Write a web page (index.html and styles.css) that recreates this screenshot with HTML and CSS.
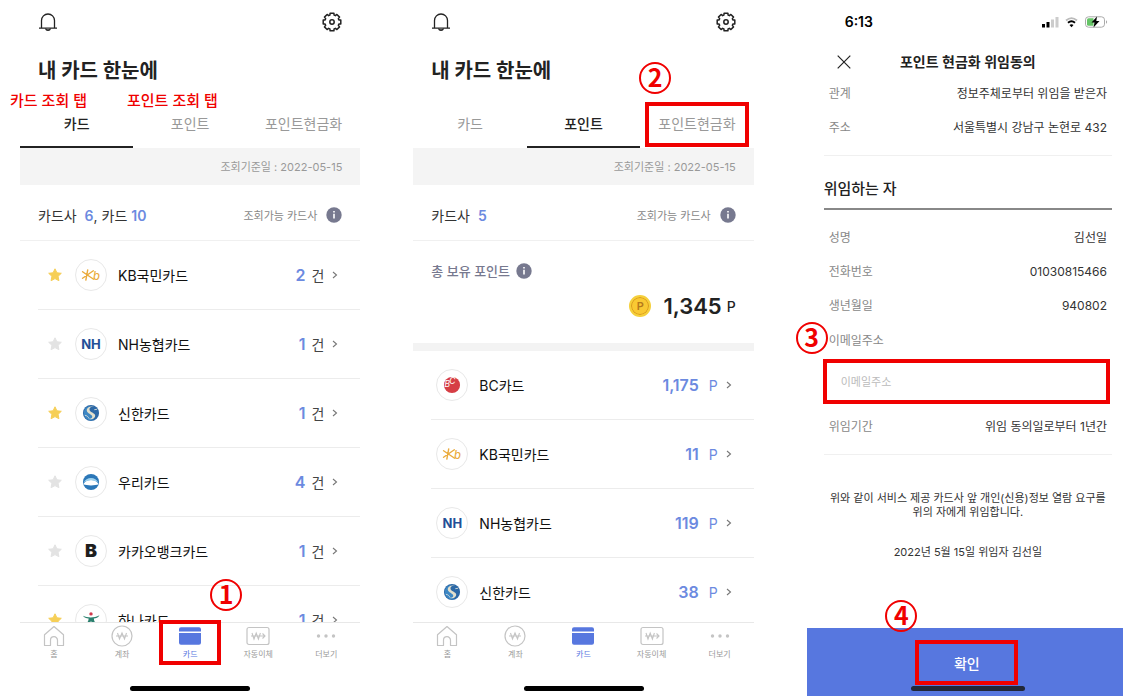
FILE: index.html
```html
<!DOCTYPE html>
<html lang="ko">
<head>
    <meta charset="UTF-8">
    <meta name="viewport" content="width=device-width, initial-scale=1.0">
    <title>내 카드 한눈에</title>
    <link rel="stylesheet" href="styles.css">
</head>
<body>
    <!-- Иконки и логотипы -->
    <svg class="sprite" aria-hidden="true">
        <symbol id="bell" viewBox="0 0 20 20">
            <path d="M3.5 16V8.5a6.5 6.5 0 0 1 13 0V16M1 16.2h18" fill="none" stroke="#222" stroke-width="1.3"/>
            <path d="M7.5 16.5a2.6 2.6 0 0 0 5 0" fill="#777" stroke="#222" stroke-width="1.2"/>
        </symbol>
        <symbol id="gear" viewBox="0 0 20 20">
            <path d="M8.1 1.2L11.9 1.2 12.1 3.1 13.4 3.65 14.9 2.45 17.55 5.1 16.35 6.6 16.9 7.9 18.8 8.1 18.8 11.9 16.9 12.1 16.35 13.4 17.55 14.9 14.9 17.55 13.4 16.35 12.1 16.9 11.9 18.8 8.1 18.8 7.9 16.9 6.6 16.35 5.1 17.55 2.45 14.9 3.65 13.4 3.1 12.1 1.2 11.9 1.2 8.1 3.1 7.9 3.65 6.6 2.45 5.1 5.1 2.45 6.6 3.65 7.9 3.1z" fill="none" stroke="#222" stroke-width="1.5" stroke-linejoin="round"/>
            <circle cx="10" cy="10" r="2.2" fill="none" stroke="#222" stroke-width="1.5"/>
        </symbol>
        <symbol id="star" viewBox="0 0 16 16">
            <path d="M8 1.8l1.9 4 4.4.5-3.2 3 .8 4.4L8 11.6l-3.9 2.1.8-4.4-3.2-3 4.4-.5z" fill="currentColor" stroke="currentColor" stroke-linejoin="round"/>
        </symbol>
        <symbol id="chevron" viewBox="0 0 6 10">
            <path d="M1 2l3.5 3L1 8" fill="none" stroke="#777" stroke-width="1.1"/>
        </symbol>
        <symbol id="info" viewBox="0 0 16 16">
            <circle cx="8" cy="8" r="7.7" fill="#77798f"/>
            <path d="M8 6.8v4.8M8 4v1.6" stroke="#fff" stroke-width="1.6"/>
        </symbol>
        <symbol id="kb" viewBox="0 0 32 32">
            <path d="M12.5 10.5l-2 11M7 12.5l11 7.5M18.5 11.5L7 19.5" fill="none" stroke="#eaab3e" stroke-width="1.5" stroke-linecap="round"/>
        </symbol>
        <symbol id="shinhan" viewBox="0 0 32 32">
            <circle cx="16" cy="16" r="8.6" fill="#2c68a6"/>
            <path d="M8.5 14a8 8 0 0 1 6-5.500l-1 5 6 5-2 5.300a8 8 0 0 1-9-9.800z" fill="#3c87c4"/>
            <path d="M20.500 10.500c-3-2.500-7-.5-6 2.500 1 2.500 6 2.800 6 6 0 2.500-3 4.500-6.500 3.500 3-.5 4-2 3-3.500-1.500-2.200-6-3-5.500-6.500.5-3.200 5.500-5 9-2z" fill="#e2dfcc"/>
            <path d="M9.500 18.500c2 0 3.500 1.500 4.500 3.500M19.500 12.500l3-.5" stroke="#cfd8d8" fill="none"/>
        </symbol>
        <symbol id="woori" viewBox="0 0 32 32">
            <circle cx="16" cy="16" r="8.6" fill="#2b77b8"/>
            <path d="M7.800 18.500c3-6.200 13.400-6.200 16.400 0-4 1.500-12.400 1.500-16.400 0z" fill="#fff"/>
            <path d="M8 17c3-7 13-7 16 0-4-4-12-4-16 0z" fill="#9fd3ef"/>
        </symbol>
        <symbol id="hana" viewBox="0 0 32 32">
            <circle cx="16" cy="9.5" r="1.8" fill="#d2384c"/>
            <path d="M7.500 11.500c5 2.500 12 2.500 17.500-.5-1 2.500-4 3.300-6 3.500 0 3 2 5.500 5 7.500h-3.500c-2-1-3.500-3-4.500-5-1 2-2.500 4-4.500 5H8c3.500-2 5.500-4.500 5.500-7.500-2.500-.3-5-1-6-3z" fill="#2b806f"/>
        </symbol>
        <symbol id="home" viewBox="0 0 24 22">
            <path d="M2.500 9.800L12 1.500l9.500 8.300V20.500h-6v-5.300a3.500 3.500 0 0 0-7 0v5.300h-6z" fill="none" stroke="#c4c4c4" stroke-width="1.2" stroke-linejoin="round"/>
        </symbol>
        <symbol id="account" viewBox="0 0 24 22">
            <circle cx="12" cy="11" r="10" fill="none" stroke="#c4c4c4" stroke-width="1.2"/>
            <path d="M7.500 8l2 6L12 8l2.500 6 2-6M6 11h12" fill="none" stroke="#c4c4c4" stroke-width="1.1"/>
        </symbol>
        <symbol id="card" viewBox="0 0 24 22">
            <path d="M3 2.200h18a2 2 0 0 1 2 2V6.500H1V4.200a2 2 0 0 1 2-2zM1 8h22v9.700a2 2 0 0 1-2 2H3a2 2 0 0 1-2-2z" fill="#5777df"/>
        </symbol>
        <symbol id="transfer" viewBox="0 0 24 22">
            <rect x="1" y="2.5" width="22" height="17" rx="2" fill="none" stroke="#c4c4c4" stroke-width="1.2"/>
            <path d="M6 8l2 6 2.200-6 2.200 6 2-6M5 11h14M16.500 8.500L19 11l-2.500 2.500" fill="none" stroke="#c4c4c4" stroke-width="1.1"/>
        </symbol>
        <symbol id="more" viewBox="0 0 24 22">
            <g fill="#c4c4c4"><circle cx="4.5" cy="11" r="1.7"/><circle cx="12" cy="11" r="1.7"/><circle cx="19.5" cy="11" r="1.7"/></g>
        </symbol>
    </svg>

    <main class="screens">
        <!-- Экран 1: карты -->
        <section class="phone">
            <header class="topbar">
                <button class="icon-btn" aria-label="알림"><svg><use href="#bell"/></svg></button>
                <button class="icon-btn" aria-label="설정"><svg><use href="#gear"/></svg></button>
            </header>
            <h1>내 카드 한눈에</h1>
            <nav class="tabs">
                <span class="note note-card">카드 조회 탭</span>
                <span class="note note-point">포인트 조회 탭</span>
                <button class="tab active">카드</button>
                <button class="tab">포인트</button>
                <button class="tab">포인트현금화</button>
            </nav>
            <p class="base-date">조회기준일 : 2022-05-15</p>
            <div class="summary">
                <p>카드사 <b class="first">6</b>, 카드 <b>10</b></p>
                <button class="available">조회가능 카드사 <svg class="info"><use href="#info"/></svg></button>
            </div>
            <ul class="list">
                <li><a class="row" href="#"><svg class="star on"><use href="#star"/></svg><svg class="logo logo-kb" viewBox="0 0 32 32"><use href="#kb"/><text x="18" y="21">b</text></svg><span class="name">KB국민카드</span><b>2</b><span class="unit">건</span><svg class="chevron"><use href="#chevron"/></svg></a></li>
                <li><a class="row" href="#"><svg class="star"><use href="#star"/></svg><span class="logo logo-nh">NH</span><span class="name">NH농협카드</span><b>1</b><span class="unit">건</span><svg class="chevron"><use href="#chevron"/></svg></a></li>
                <li><a class="row" href="#"><svg class="star on"><use href="#star"/></svg><svg class="logo"><use href="#shinhan"/></svg><span class="name">신한카드</span><b>1</b><span class="unit">건</span><svg class="chevron"><use href="#chevron"/></svg></a></li>
                <li><a class="row" href="#"><svg class="star"><use href="#star"/></svg><svg class="logo"><use href="#woori"/></svg><span class="name">우리카드</span><b>4</b><span class="unit">건</span><svg class="chevron"><use href="#chevron"/></svg></a></li>
                <li><a class="row" href="#"><svg class="star"><use href="#star"/></svg><span class="logo logo-kakao">B</span><span class="name">카카오뱅크카드</span><b>1</b><span class="unit">건</span><svg class="chevron"><use href="#chevron"/></svg></a></li>
                <li><a class="row" href="#"><svg class="star on"><use href="#star"/></svg><svg class="logo"><use href="#hana"/></svg><span class="name">하나카드</span><b>1</b><span class="unit">건</span><svg class="chevron"><use href="#chevron"/></svg></a></li>
            </ul>
            <nav class="bottom-nav">
                <a href="#"><svg><use href="#home"/></svg>홈</a>
                <a href="#"><svg><use href="#account"/></svg>계좌</a>
                <a href="#" class="active"><svg><use href="#card"/></svg>카드<span class="mark mark-nav"></span><span class="step step-1">1</span></a>
                <a href="#"><svg><use href="#transfer"/></svg>자동이체</a>
                <a href="#"><svg><use href="#more"/></svg>더보기</a>
                <span class="home-bar"></span>
            </nav>
        </section>

        <!-- Экран 2: баллы -->
        <section class="phone">
            <header class="topbar">
                <button class="icon-btn" aria-label="알림"><svg><use href="#bell"/></svg></button>
                <button class="icon-btn" aria-label="설정"><svg><use href="#gear"/></svg></button>
            </header>
            <h1>내 카드 한눈에</h1>
            <nav class="tabs">
                <button class="tab">카드</button>
                <button class="tab active">포인트</button>
                <button class="tab">포인트현금화<span class="mark mark-tab"></span><span class="step step-2">2</span></button>
            </nav>
            <p class="base-date">조회기준일 : 2022-05-15</p>
            <div class="summary">
                <p>카드사 <b class="first">5</b></p>
                <button class="available">조회가능 카드사 <svg class="info"><use href="#info"/></svg></button>
            </div>
            <div class="total">
                <p class="total-label">총 보유 포인트 <svg class="info"><use href="#info"/></svg></p>
                <p class="total-value"><span class="coin">P</span><strong>1,345</strong><span class="p">P</span></p>
            </div>
            <ul class="list points">
                <li><a class="row" href="#"><svg class="logo logo-bc" viewBox="0 0 32 32"><circle cx="16" cy="16" r="8.6" fill="#d63e45"/><text x="8" y="18">B</text><text x="13" y="15">C</text></svg><span class="name">BC카드</span><b>1,175</b><span class="unit">P</span><svg class="chevron"><use href="#chevron"/></svg></a></li>
                <li><a class="row" href="#"><svg class="logo logo-kb" viewBox="0 0 32 32"><use href="#kb"/><text x="18" y="21">b</text></svg><span class="name">KB국민카드</span><b>11</b><span class="unit">P</span><svg class="chevron"><use href="#chevron"/></svg></a></li>
                <li><a class="row" href="#"><span class="logo logo-nh">NH</span><span class="name">NH농협카드</span><b>119</b><span class="unit">P</span><svg class="chevron"><use href="#chevron"/></svg></a></li>
                <li><a class="row" href="#"><svg class="logo"><use href="#shinhan"/></svg><span class="name">신한카드</span><b>38</b><span class="unit">P</span><svg class="chevron"><use href="#chevron"/></svg></a></li>
            </ul>
            <nav class="bottom-nav">
                <a href="#"><svg><use href="#home"/></svg>홈</a>
                <a href="#"><svg><use href="#account"/></svg>계좌</a>
                <a href="#" class="active"><svg><use href="#card"/></svg>카드</a>
                <a href="#"><svg><use href="#transfer"/></svg>자동이체</a>
                <a href="#"><svg><use href="#more"/></svg>더보기</a>
                <span class="home-bar"></span>
            </nav>
        </section>

        <!-- Экран 3: согласие -->
        <section class="phone consent">
            <div class="status">
                <span>6:13</span>
                <svg width="66" height="12" viewBox="0 0 66 12" aria-hidden="true">
                    <path d="M0 8h3v3.500H0zM4.500 6h3v5.500h-3z" fill="#000"/>
                    <path d="M9 3.500h3v8H9zM13.500 1h3v10.500h-3z" fill="#ccc"/>
                    <path d="M24 4.500c3.500-3 7.500-3 11 0" fill="none" stroke="#bbb" stroke-width="1.8"/>
                    <path d="M26 6.800c2.200-2 4.800-2 7 0" fill="none" stroke="#000" stroke-width="1.9"/>
                    <path d="M27.500 9c1.200-1 2.800-1 4 0l-2 2.200z" fill="#000"/>
                    <rect x="43.5" y=".8" width="19" height="10.4" rx="3" fill="#fff" stroke="#aaa"/>
                    <path d="M46.500 2.300h5v7.400h-5a1.500 1.500 0 0 1-1.500-1.500V3.800a1.500 1.500 0 0 1 1.500-1.500z" fill="#65c466"/>
                    <path d="M64 4.200c1.500.7 1.500 2.900 0 3.600z" fill="#aaa"/>
                    <path d="M55 .5l-5.500 6h3L51.500 11.500l6-6.500h-3.200z" fill="#000"/>
                </svg>
            </div>
            <header class="consent-head">
                <button class="close" aria-label="닫기"><svg viewBox="0 0 14 14"><path d="M.7.7l12.600 12.600M13.300.7L.7 13.300" stroke="#222" stroke-width="1.2"/></svg></button>
                <h2>포인트 현금화 위임동의</h2>
            </header>
            <dl class="info-list agent">
                <div><dt>관계</dt><dd>정보주체로부터 위임을 받은자</dd></div>
                <div><dt>주소</dt><dd>서울특별시 강남구 논현로 432</dd></div>
            </dl>
            <h3>위임하는 자</h3>
            <dl class="info-list">
                <div><dt>성명</dt><dd>김선일</dd></div>
                <div><dt>전화번호</dt><dd>01030815466</dd></div>
                <div><dt>생년월일</dt><dd>940802</dd></div>
            </dl>
            <div class="email">
                <label for="email">이메일주소</label>
                <input type="email" id="email" placeholder="이메일주소">
                <span class="step step-3">3</span>
            </div>
            <dl class="info-list period">
                <div><dt>위임기간</dt><dd>위임 동의일로부터 1년간</dd></div>
            </dl>
            <div class="statement">
                <p>위와 같이 서비스 제공 카드사 앞 개인(신용)정보 열람 요구를 위의 자에게 위임합니다.</p>
                <p>2022년 5월 15일 위임자 김선일</p>
            </div>
            <footer class="confirm-bar">
                <button class="confirm">확인<span class="step step-4">4</span></button>
                <span class="home-bar"></span>
            </footer>
        </section>
    </main>
</body>
</html>
```
FILE: styles.css
```css
* {
    box-sizing: border-box;
}

body {
    margin: 0;
    background: #fff;
    color: #222;
    font-family: Inter, "Noto Sans CJK KR", sans-serif;
    font-size: 14px;
}

h1, h2, h3, p, dl, dd, ul {
    margin: 0;
    padding: 0;
}

ul {
    list-style: none;
}

a {
    color: inherit;
    text-decoration: none;
}

button {
    padding: 0;
    border: none;
    background: none;
    color: inherit;
    font: inherit;
    cursor: pointer;
}

.sprite {
    position: absolute;
    width: 0;
    height: 0;
}

.screens {
    display: grid;
    grid-template-columns: 340fr 340fr 316fr;
    gap: 53px;
    height: 100vh;
    min-height: 600px;
    padding-left: 20px;
}

.phone {
    display: flex;
    flex-direction: column;
    min-width: 0;
    min-height: 0;
}

/* Шапка */
.topbar {
    display: flex;
    justify-content: space-between;
    align-items: center;
    height: 44px;
    padding: 0 18px;
}

.icon-btn,
.icon-btn svg {
    display: block;
    width: 20px;
    height: 20px;
}

h1 {
    padding-left: 18px;
    font-size: 20px;
    font-weight: 700;
    line-height: 54px;
}

/* Вкладки */
.tabs {
    position: relative;
    display: flex;
    height: 50px;
}

.tab {
    position: relative;
    flex: 1;
    padding-top: 2px;
    border-bottom: 2px solid transparent;
    color: #999;
}

.tab.active {
    border-color: #222;
    color: #222;
    font-weight: 500;
}

.base-date {
    padding: 1px 18px 0 0;
    background: #f4f4f4;
    color: #999;
    font-size: 11px;
    line-height: 36px;
    text-align: right;
}

.summary {
    display: flex;
    justify-content: space-between;
    align-items: center;
    height: 56px;
    padding: 4px 18px 0;
    border-bottom: 1px solid #f0f0f0;
    color: #333;
}

.summary b,
.row b {
    color: #6c8ae0;
    font-weight: 600;
}

.summary .first {
    margin-left: 4px;
}

.available {
    display: flex;
    align-items: center;
    gap: 9px;
    color: #888;
    font-size: 11px;
}

.info {
    width: 16px;
    height: 16px;
}

/* Сумма баллов */
.total {
    display: flex;
    flex-direction: column;
    gap: 8px;
    height: 110px;
    padding: 20px 18px 0;
    border-bottom: 8px solid #f3f3f3;
}

.total-label {
    display: flex;
    align-items: center;
    gap: 6px;
    color: #77798f;
    font-size: 13px;
    font-weight: 500;
    line-height: 20px;
}

.total-value {
    display: flex;
    justify-content: flex-end;
    align-items: center;
    line-height: 30px;
}

.total-value strong {
    margin: 0 5px 0 12px;
    font-size: 22px;
    font-weight: 600;
}

.total-value .p {
    font-weight: 500;
    padding-top: 3px;
}

.coin {
    width: 22px;
    height: 22px;
    border: 2px solid #f5d03c;
    border-radius: 50%;
    background: #f9c933;
    box-shadow: inset 0 0 0 1px #d99a1c;
    color: #b5791b;
    font-size: 11px;
    font-weight: 600;
    line-height: 18px;
    text-align: center;
}

/* Список карт */
.list {
    flex: 1;
    min-height: 0;
    margin-left: 18px;
    overflow: hidden;
}

.row {
    display: flex;
    align-items: center;
    height: 69px;
    padding: 0 22px 0 9px;
    border-bottom: 1px solid #ececec;
}

.points .row {
    padding-left: 5px;
}

.star {
    width: 16px;
    height: 16px;
    margin-right: 12px;
    color: #e3e3e3;
}

.star.on {
    color: #f6cf57;
}

.logo {
    width: 32px;
    height: 32px;
    border: 1px solid #e8e8e8;
    border-radius: 50%;
    line-height: 30px;
    text-align: center;
}

.logo-nh {
    color: #234f97;
    font-size: 13px;
    font-weight: 700;
}

.logo-kakao {
    color: #1e1e1e;
    font-size: 18px;
    font-weight: 900;
}

.logo-kb {
    fill: #eaab3e;
    font-size: 12px;
    font-style: italic;
    font-weight: 500;
}

.logo-bc {
    fill: #fff;
    font-size: 9px;
    font-style: italic;
}

.name {
    flex: 1;
    margin-left: 11px;
    color: #111;
}

.row b {
    font-size: 16px;
}

.unit {
    margin: 0 8px 0 6px;
    color: #444;
}

.points .unit {
    margin-left: 10px;
    color: #6c8ae0;
}

.chevron {
    width: 6px;
    height: 10px;
}

/* Нижнее меню */
.bottom-nav {
    position: relative;
    display: flex;
    height: 74px;
    padding-top: 2px;
    border-top: 1px solid #e8e8e8;
}

.bottom-nav a {
    position: relative;
    flex: 1;
    display: flex;
    flex-direction: column;
    align-items: center;
    height: 40px;
    color: #999;
    font-size: 8px;
    line-height: 14px;
}

.bottom-nav .active {
    color: #5777df;
}

.bottom-nav svg {
    width: 24px;
    height: 22px;
}

.home-bar {
    position: absolute;
    bottom: 5px;
    left: 50%;
    width: 120px;
    height: 5px;
    border-radius: 3px;
    background: #000;
    transform: translateX(-50%);
}

/* Согласие */
.status {
    display: flex;
    justify-content: space-between;
    align-items: center;
    height: 43px;
    padding: 0 15px 0 38px;
    color: #000;
    font-weight: 600;
}

.consent-head {
    position: relative;
    height: 38px;
    padding-left: 6px;
}

.close {
    position: absolute;
    top: 12px;
    left: 30px;
    width: 14px;
    height: 14px;
}

.close svg {
    display: block;
}

h2 {
    font-size: 14px;
    font-weight: 600;
    line-height: 37px;
    text-align: center;
}

.info-list,
.email,
h3 {
    margin: 0 11px 0 17px;
}

.info-list,
.email {
    padding: 0 5px;
    font-size: 12px;
}

.info-list div {
    display: flex;
    justify-content: space-between;
    line-height: 34px;
}

dt,
.email label {
    color: #888;
}

dd {
    color: #333;
}

.agent {
    margin-top: -4px;
    padding-bottom: 10px;
    border-bottom: 1px solid #f0f0f0;
}

h3 {
    padding-top: 13px;
    margin-bottom: 11px;
    border-bottom: 2px solid #888;
    font-size: 15px;
    font-weight: 500;
    line-height: 39px;
}

.email {
    position: relative;
    padding-right: 0;
}

.email label {
    display: block;
    line-height: 36px;
}

.email input {
    display: block;
    width: calc(100% + 4px);
    height: 45px;
    margin-left: -6px;
    padding: 0 14px;
    border: 4px solid #f00000;
    font: inherit;
    font-size: 11px;
}

.email input::placeholder {
    color: #bbb;
}

.period {
    padding-top: 6px;
    padding-bottom: 10px;
    border-bottom: 1px solid #f0f0f0;
}

.statement {
    flex: 1;
    display: flex;
    flex-direction: column;
    gap: 26px;
    padding: 36px 10px 0 16px;
    color: #333;
    font-size: 11px;
    line-height: 14px;
    text-align: center;
    word-break: keep-all;
}

.confirm-bar {
    position: relative;
    display: flex;
    justify-content: center;
    height: 68px;
    padding: 12px 0 0 4px;
    background: #5777df;
}

.confirm {
    position: relative;
    width: 103px;
    height: 45px;
    border: 4px solid #f00000;
    color: #fff;
    font-weight: 500;
}

.consent .home-bar {
    left: 51%;
    width: 114px;
    background: #222838;
}

/* Пометки инструкции */
.note {
    position: absolute;
    top: -8px;
    color: #f00000;
    font-size: 15px;
    font-weight: 500;
    line-height: 22px;
    white-space: nowrap;
}

.note-card {
    left: -10px;
}

.note-point {
    left: 107px;
}

.mark {
    position: absolute;
    border: 4px solid #f00000;
}

.mark-nav {
    top: -5px;
    left: 3px;
    right: 3px;
    height: 45px;
}

.mark-tab {
    top: 4px;
    left: 5px;
    right: 5px;
    height: 45px;
}

.step {
    position: absolute;
    width: 32px;
    height: 32px;
    border: 2px solid #f00000;
    border-radius: 50%;
    color: #f00000;
    font-family: "Noto Sans CJK KR", sans-serif;
    font-size: 25px;
    font-weight: 700;
    line-height: 25px;
    text-align: center;
}

.step-1 {
    top: -46px;
    left: 54px;
}

.step-2 {
    top: -36px;
    left: -1px;
}

.step-3 {
    top: -1px;
    left: -28px;
}

.step-4 {
    top: -44px;
    left: -34px;
}
```
